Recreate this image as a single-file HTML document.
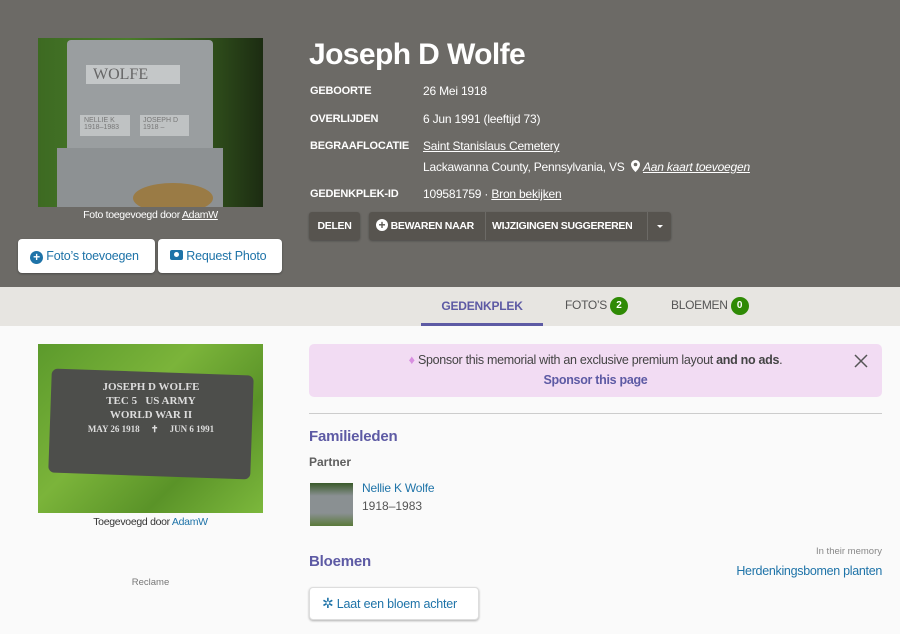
<!DOCTYPE html>
<html><head><meta charset="utf-8"><style>
*{margin:0;padding:0;box-sizing:border-box}
body{width:900px;height:634px;overflow:hidden;background:#fafafa;font-family:"Liberation Sans",sans-serif;position:relative;color:#333}
.a{position:absolute;white-space:nowrap}
.hdr{left:0;top:0;width:900px;height:287px;background:#6c6a66}
.tabs{left:0;top:287px;width:900px;height:39px;background:#e7e5e1}
.lbl{color:#fff;font-weight:bold;font-size:11px;letter-spacing:-.2px}
.val{color:#fff;font-size:12px;letter-spacing:-.2px}
u{text-decoration:underline}
.btn{background:#57544f;color:#fff;font-size:10.5px;font-weight:bold;height:28px;line-height:28px;border-radius:3px;box-shadow:0 1px 2px rgba(0,0,0,.3);letter-spacing:-.3px}
.wbtn{background:#fff;border-radius:4px;color:#1e73a8;font-size:12.5px;height:34px;line-height:34px;box-shadow:0 1px 2px rgba(0,0,0,.3);letter-spacing:-.2px}
.badge{display:inline-block;background:#2f8a05;color:#fff;border-radius:9px;width:18px;height:18px;line-height:18px;text-align:center;font-size:10px;font-weight:bold;vertical-align:middle;letter-spacing:0}
.h2{color:#5d5aa4;font-size:15px;font-weight:bold;letter-spacing:-.2px}
</style></head><body>
<div class="a hdr"></div>
<div class="a" style="left:38px;top:38px;width:225px;height:169px;background:linear-gradient(90deg,#3d6a22,#4a7d2a 40%,#2d4a1a 80%,#1c2c12);overflow:hidden">
  <div class="a" style="left:29px;top:2px;width:146px;height:118px;background:#9a9ea0;border-radius:4px 4px 0 0"></div>
  <div class="a" style="left:19px;top:110px;width:166px;height:59px;background:#8d9193"></div>
  <div class="a" style="left:48px;top:27px;width:94px;height:19px;background:#c4c7c8;color:#666;font-family:'Liberation Serif',serif;font-size:16px;line-height:19px;padding-left:7px">WOLFE</div>
  <div class="a" style="left:42px;top:77px;width:50px;height:21px;background:#bfc2c3;color:#777;font-size:7px;padding:2px 4px">NELLIE K<br>1918–1983</div>
  <div class="a" style="left:102px;top:77px;width:49px;height:21px;background:#bfc2c3;color:#777;font-size:7px;padding:2px 3px">JOSEPH D<br>1918 –</div>
  <div class="a" style="left:95px;top:145px;width:80px;height:30px;background:#9a7b45;border-radius:50%"></div>
</div>
<div class="a" style="left:38px;top:209px;width:225px;text-align:center;color:#fff;font-size:10.5px;letter-spacing:-.3px">Foto toegevoegd door <u>AdamW</u></div>
<div class="a wbtn" style="left:18px;top:239px;width:137px;padding-left:12px"><span style="display:inline-block;width:13px;height:13px;border-radius:50%;background:#1e73a8;color:#fff;font-size:12px;line-height:13px;text-align:center;font-weight:bold;vertical-align:-1px">+</span> Foto’s toevoegen</div>
<div class="a wbtn" style="left:158px;top:239px;width:124px;padding-left:12px"><span style="display:inline-block;width:13px;height:10px;background:#1e73a8;border-radius:2px;vertical-align:0;position:relative"><span style="position:absolute;left:4px;top:2px;width:5px;height:5px;border-radius:50%;background:#fff"></span></span> Request Photo</div>

<div class="a" style="left:309px;top:38px;color:#fff;font-size:30px;font-weight:bold;letter-spacing:-.6px">Joseph D Wolfe</div>
<div class="a lbl" style="left:310px;top:85px">GEBOORTE</div><div class="a val" style="left:423px;top:84px">26 Mei 1918</div>
<div class="a lbl" style="left:310px;top:113px">OVERLIJDEN</div><div class="a val" style="left:423px;top:112px">6 Jun 1991 (leeftijd 73)</div>
<div class="a lbl" style="left:310px;top:140px">BEGRAAFLOCATIE</div><div class="a val" style="left:423px;top:139px"><u>Saint Stanislaus Cemetery</u></div>
<div class="a val" style="left:423px;top:160px">Lackawanna County, Pennsylvania, VS &nbsp;<svg width="9" height="12" viewBox="0 0 9 12" style="vertical-align:-1px"><path d="M4.5 0a4.5 4.5 0 0 0-4.5 4.5C0 8 4.5 12 4.5 12S9 8 9 4.5A4.5 4.5 0 0 0 4.5 0zm0 6.3a1.8 1.8 0 1 1 0-3.6 1.8 1.8 0 0 1 0 3.6z" fill="#fff"/></svg> <i><u>Aan kaart toevoegen</u></i></div>
<div class="a lbl" style="left:310px;top:188px">GEDENKPLEK-ID</div><div class="a val" style="left:423px;top:187px">109581759 · <u>Bron bekijken</u></div>
<div class="a btn" style="left:309px;top:212px;width:51px;text-align:center">DELEN</div>
<div class="a btn" style="left:369px;top:212px;width:302px"></div>
<div class="a" style="left:376px;top:212px;color:#fff;font-size:10.5px;font-weight:bold;line-height:28px;letter-spacing:-.3px"><span style="display:inline-block;width:12px;height:12px;border-radius:50%;background:#fff;color:#57544f;text-align:center;line-height:12px;font-size:12px;letter-spacing:0">+</span> BEWAREN NAAR</div>
<div class="a" style="left:485px;top:212px;width:1px;height:28px;background:#6c6a66"></div>
<div class="a" style="left:492px;top:212px;color:#fff;font-size:10.5px;font-weight:bold;line-height:28px;letter-spacing:-.3px">WIJZIGINGEN SUGGEREREN</div>
<div class="a" style="left:647px;top:212px;width:1px;height:28px;background:#6c6a66"></div>
<div class="a" style="left:657px;top:225px;border-left:3px solid transparent;border-right:3px solid transparent;border-top:3px solid #fff"></div>

<div class="a tabs"></div>
<div class="a" style="left:421px;top:299px;width:122px;text-align:center;color:#5d5aa4;font-size:12px;font-weight:bold;letter-spacing:-.2px">GEDENKPLEK</div>
<div class="a" style="left:421px;top:323px;width:122px;height:3px;background:#5d5aa4"></div>
<div class="a" style="left:565px;top:297px;color:#555;font-size:12px;letter-spacing:-.3px">FOTO’S <span class="badge">2</span></div>
<div class="a" style="left:671px;top:297px;color:#555;font-size:12px;letter-spacing:-.3px">BLOEMEN <span class="badge">0</span></div>

<div class="a" style="left:38px;top:344px;width:225px;height:169px;background:linear-gradient(135deg,#5c9a2c,#7bb43a 40%,#5a9328 70%,#7cb83c);overflow:hidden">
  <div class="a" style="left:12px;top:28px;width:202px;height:104px;background:#4d4e4b;transform:rotate(2deg);border-radius:6px"></div>
  <div class="a" style="left:14px;top:36px;width:198px;text-align:center;color:#ddd;font-family:'Liberation Serif',serif;font-size:11px;line-height:14px;font-weight:bold">JOSEPH D WOLFE<br>TEC 5 &nbsp; US ARMY<br>WORLD WAR II<br><span style="font-size:9px">MAY 26 1918 &nbsp;&nbsp;&nbsp; ✝ &nbsp;&nbsp;&nbsp; JUN 6 1991</span></div>
</div>
<div class="a" style="left:38px;top:516px;width:225px;text-align:center;color:#333;font-size:10.5px;letter-spacing:-.3px">Toegevoegd door <span style="color:#1e73a8">AdamW</span></div>
<div class="a" style="left:38px;top:577px;width:225px;text-align:center;color:#777;font-size:9.5px">Reclame</div>

<div class="a" style="left:309px;top:344px;width:573px;height:53px;background:#f2dcf3;border-radius:5px"></div>
<div class="a" style="left:309px;top:353px;width:573px;text-align:center;font-size:12.5px;color:#444;letter-spacing:-.3px"><span style="color:#d88fe0">♦</span> Sponsor this memorial with an exclusive premium layout <b>and no ads</b>.</div>
<div class="a" style="left:309px;top:373px;width:573px;text-align:center;font-size:12.5px;color:#5d5aa4;font-weight:bold;letter-spacing:-.3px">Sponsor this page</div>
<svg class="a" style="left:854px;top:354px" width="14" height="14"><path d="M1 1L13 13M13 1L1 13" stroke="#555" stroke-width="1.5"/></svg>
<div class="a" style="left:309px;top:413px;width:573px;height:1px;background:#ccc"></div>
<div class="a h2" style="left:309px;top:428px">Familieleden</div>
<div class="a" style="left:309px;top:455px;font-size:12px;color:#444;font-weight:bold;opacity:.85">Partner</div>
<div class="a" style="left:310px;top:483px;width:43px;height:43px;background:linear-gradient(180deg,#3a5a2a,#8a9092 30%,#8a9092 70%,#5a7a3a)"></div>
<div class="a" style="left:362px;top:481px;font-size:12px;color:#1e73a8;letter-spacing:-.2px">Nellie K Wolfe</div>
<div class="a" style="left:362px;top:499px;font-size:12px;color:#555">1918–1983</div>
<div class="a h2" style="left:309px;top:553px">Bloemen</div>
<div class="a" style="left:700px;top:546px;width:182px;text-align:right;font-size:9.5px;color:#888">In their memory</div>
<div class="a" style="left:680px;top:564px;width:202px;text-align:right;font-size:12.5px;color:#1e73a8;letter-spacing:-.3px">Herdenkingsbomen planten</div>
<div class="a wbtn" style="left:309px;top:587px;width:170px;height:33px;line-height:31px;padding-left:12px;font-size:12.5px;border:1px solid #ddd"><span style="font-size:14px">✲</span> Laat een bloem achter</div>
</body></html>
